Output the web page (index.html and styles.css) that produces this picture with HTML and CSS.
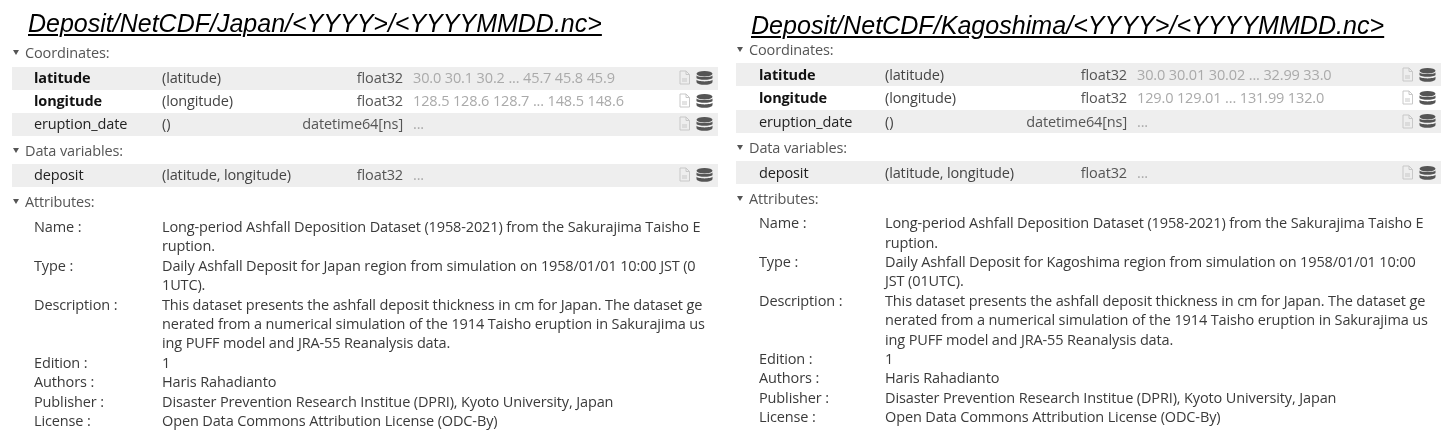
FILE: index.html
```html
<!DOCTYPE html>
<html lang="en">
<head>
<meta charset="utf-8">
<title>Deposit NetCDF datasets</title>
<link rel="stylesheet" href="styles.css">
</head>
<body>
<svg class="defs" width="0" height="0" aria-hidden="true">
  <symbol id="file" viewBox="0 0 11 14">
    <path d="M1 .5h6l3.500 3.500v9.500h-9.500z M7 .5v3.500h3.500" fill="none" stroke="#c8c8c8"/>
    <path d="M3 8.500h5M3 10.500h5" stroke="#c8c8c8"/>
  </symbol>
  <symbol id="db" viewBox="0 0 17 14">
    <ellipse cx="8.500" cy="2.800" rx="8" ry="2.800" fill="#555"/>
    <path d="M.5 4.500C2 6.600 15 6.600 16.500 4.500V7C15 9.400 2 9.400 .5 7z" fill="#555"/>
    <path d="M.5 8.800C2 10.900 15 10.900 16.500 8.800V11.200C15 14.700 2 14.700 .5 11.200z" fill="#555"/>
  </symbol>
</svg>
<main class="page">
  <section class="panel panel-japan">
    <h1 class="path">Deposit/NetCDF/Japan/&lt;YYYY&gt;/&lt;YYYYMMDD.nc&gt;</h1>
    <h2 class="section">Coordinates:</h2>
    <ul class="vars">
      <li class="var"><b class="name">latitude</b><span class="dims">(latitude)</span><span class="dtype">float32</span><span class="preview">30.0 30.1 30.2 ... 45.7 45.8 45.9</span><span class="icons"><svg class="i-file"><use href="#file"/></svg><svg class="i-db"><use href="#db"/></svg></span></li>
      <li class="var"><b class="name">longitude</b><span class="dims">(longitude)</span><span class="dtype">float32</span><span class="preview">128.5 128.6 128.7 ... 148.5 148.6</span><span class="icons"><svg class="i-file"><use href="#file"/></svg><svg class="i-db"><use href="#db"/></svg></span></li>
      <li class="var"><span class="name">eruption_date</span><span class="dims">()</span><span class="dtype">datetime64[ns]</span><span class="preview">...</span><span class="icons"><svg class="i-file"><use href="#file"/></svg><svg class="i-db"><use href="#db"/></svg></span></li>
    </ul>
    <h2 class="section">Data variables:</h2>
    <ul class="vars">
      <li class="var"><span class="name">deposit</span><span class="dims">(latitude, longitude)</span><span class="dtype">float32</span><span class="preview">...</span><span class="icons"><svg class="i-file"><use href="#file"/></svg><svg class="i-db"><use href="#db"/></svg></span></li>
    </ul>
    <h2 class="section">Attributes:</h2>
    <dl class="attrs">
      <dt>Name :</dt><dd>Long-period Ashfall Deposition Dataset (1958-2021) from the Sakurajima Taisho E<br>ruption.</dd>
      <dt>Type :</dt><dd>Daily Ashfall Deposit for Japan region from simulation on 1958/01/01 10:00 JST (0<br>1UTC).</dd>
      <dt>Description :</dt><dd>This dataset presents the ashfall deposit thickness in cm for Japan. The dataset ge<br>nerated from a numerical simulation of the 1914 Taisho eruption in Sakurajima us<br>ing PUFF model and JRA-55 Reanalysis data.</dd>
      <dt>Edition :</dt><dd>1</dd>
      <dt>Authors :</dt><dd>Haris Rahadianto</dd>
      <dt>Publisher :</dt><dd>Disaster Prevention Research Institue (DPRI), Kyoto University, Japan</dd>
      <dt>License :</dt><dd>Open Data Commons Attribution License (ODC-By)</dd>
    </dl>
  </section>
  <section class="panel panel-kagoshima">
    <h1 class="path">Deposit/NetCDF/Kagoshima/&lt;YYYY&gt;/&lt;YYYYMMDD.nc&gt;</h1>
    <h2 class="section">Coordinates:</h2>
    <ul class="vars">
      <li class="var"><b class="name">latitude</b><span class="dims">(latitude)</span><span class="dtype">float32</span><span class="preview">30.0 30.01 30.02 ... 32.99 33.0</span><span class="icons"><svg class="i-file"><use href="#file"/></svg><svg class="i-db"><use href="#db"/></svg></span></li>
      <li class="var"><b class="name">longitude</b><span class="dims">(longitude)</span><span class="dtype">float32</span><span class="preview">129.0 129.01 ... 131.99 132.0</span><span class="icons"><svg class="i-file"><use href="#file"/></svg><svg class="i-db"><use href="#db"/></svg></span></li>
      <li class="var"><span class="name">eruption_date</span><span class="dims">()</span><span class="dtype">datetime64[ns]</span><span class="preview">...</span><span class="icons"><svg class="i-file"><use href="#file"/></svg><svg class="i-db"><use href="#db"/></svg></span></li>
    </ul>
    <h2 class="section">Data variables:</h2>
    <ul class="vars">
      <li class="var"><span class="name">deposit</span><span class="dims">(latitude, longitude)</span><span class="dtype">float32</span><span class="preview">...</span><span class="icons"><svg class="i-file"><use href="#file"/></svg><svg class="i-db"><use href="#db"/></svg></span></li>
    </ul>
    <h2 class="section">Attributes:</h2>
    <dl class="attrs">
      <dt>Name :</dt><dd>Long-period Ashfall Deposition Dataset (1958-2021) from the Sakurajima Taisho E<br>ruption.</dd>
      <dt>Type :</dt><dd>Daily Ashfall Deposit for Kagoshima region from simulation on 1958/01/01 10:00<br>JST (01UTC).</dd>
      <dt>Description :</dt><dd>This dataset presents the ashfall deposit thickness in cm for Japan. The dataset ge<br>nerated from a numerical simulation of the 1914 Taisho eruption in Sakurajima us<br>ing PUFF model and JRA-55 Reanalysis data.</dd>
      <dt>Edition :</dt><dd>1</dd>
      <dt>Authors :</dt><dd>Haris Rahadianto</dd>
      <dt>Publisher :</dt><dd>Disaster Prevention Research Institue (DPRI), Kyoto University, Japan</dd>
      <dt>License :</dt><dd>Open Data Commons Attribution License (ODC-By)</dd>
    </dl>
  </section>
</main>
</body>
</html>
```
FILE: styles.css
```css
* { box-sizing: border-box; }
html, body { margin: 0; padding: 0; background: #fff; }
body {
  width: 1453px;
  height: 443px;
  overflow: hidden;
  font-family: "Open Sans", "Noto Sans", sans-serif;
  font-size: 14.500px;
  letter-spacing: -0.130px;
  color: #3a3a3a;
}
.defs { position: absolute; }
.page {
  display: flex;
  gap: 18px;
  padding: 0 12px;
  filter: blur(0.3px);
}
.panel { width: 706px; flex: none; }
.panel-kagoshima { width: 705px; }

.path {
  margin: 0;
  height: 42px;
  padding: 9px 0 0 16px;
  font-family: "Liberation Sans", Arial, sans-serif;
  font-size: 25px;
  font-weight: 400;
  font-style: italic;
  line-height: 28px;
  letter-spacing: 0;
  color: #000;
  text-decoration: underline;
  text-decoration-thickness: 2px;
  text-underline-offset: 2px;
  white-space: nowrap;
}
.panel-kagoshima .path {
  height: 38px;
  padding: 11px 0 0 15px;
  font-size: 25.100px;
}

.section {
  display: flex;
  align-items: center;
  gap: 6px;
  margin: 0;
  height: 25px;
  padding: 0 0 4px 1px;
  font-size: 14.500px;
  font-weight: 400;
  color: #555;
}
.vars + .section { padding-bottom: 2px; }
.panel-kagoshima .section { padding-bottom: 2px; }
.section::before {
  content: "";
  width: 0;
  height: 0;
  border-left: 3.500px solid transparent;
  border-right: 3.500px solid transparent;
  border-top: 5px solid #555;
}
.vars {
  list-style: none;
  margin: 0 0 3px;
  padding: 0;
}
.var {
  display: grid;
  grid-template-columns: 128px 130px 111px 1fr 44px;
  align-items: center;
  height: 23px;
  padding: 0 0 2px 22px;
  white-space: nowrap;
}
.var:nth-child(odd) { background: #eeeeee; }
.panel-kagoshima .var {
  grid-template-columns: 126px 131px 111px 1fr 44px;
  height: 23.300px;
  padding: 0 0 0 23px;
}
.name { color: #222; font-weight: 400; }
b.name { font-weight: 700; color: #111; }
.dims { color: #444; }
.dtype { justify-self: end; color: #555; }
.preview { padding-left: 10px; color: #aaa; }
.icons {
  display: flex;
  align-items: center;
  justify-content: flex-end;
  gap: 6px;
  padding-right: 5px;
}
.i-file { width: 11px; height: 15px; flex: none; }
.i-db { width: 17px; height: 14px; flex: none; }

.attrs {
  display: grid;
  grid-template-columns: 128px 1fr;
  margin: 2px 0 0;
  padding-left: 22px;
  line-height: 19.400px;
  white-space: nowrap;
}
.panel-kagoshima .attrs { grid-template-columns: 126px 1fr; margin-top: 1px; padding-left: 23px; }
.attrs dt, .attrs dd { margin: 0; }
```
